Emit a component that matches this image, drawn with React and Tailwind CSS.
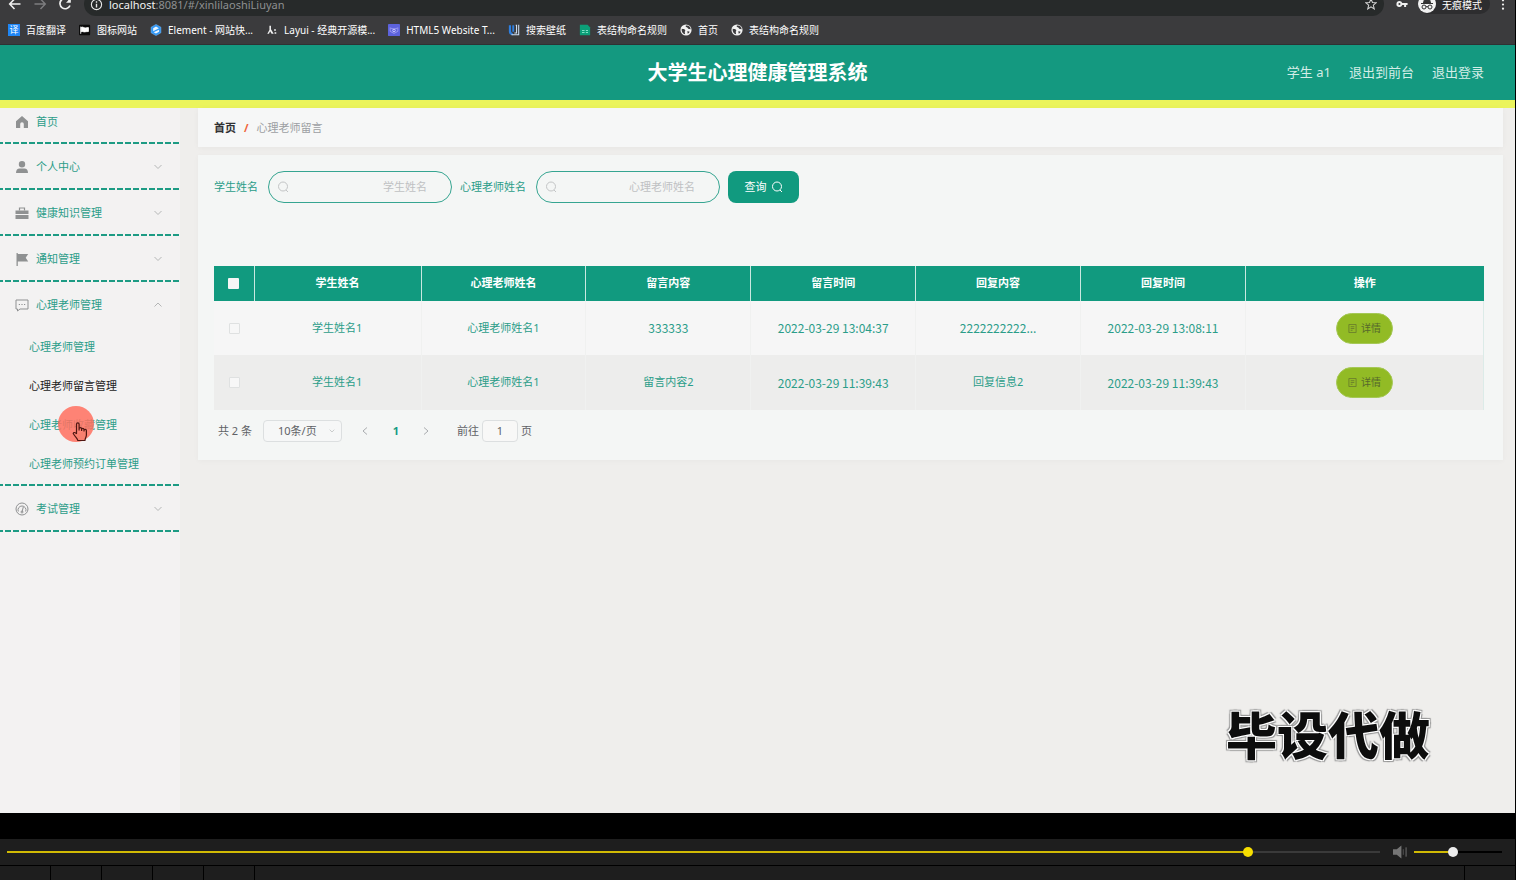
import React, { useState } from "react";

const bookmarks = [
  { id: "fanyi", label: "百度翻译" },
  { id: "flag", label: "图标网站" },
  { id: "element", label: "Element - 网站快..." },
  { id: "layui", label: "Layui - 经典开源模..." },
  { id: "html5", label: "HTML5 Website T..." },
  { id: "wall", label: "搜索壁纸" },
  { id: "sheet", label: "表结构命名规则" },
  { id: "globe", label: "首页" },
  { id: "globe", label: "表结构命名规则" },
];

const columns = ["学生姓名", "心理老师姓名", "留言内容", "留言时间", "回复内容", "回复时间"];

const rows = [
  ["学生姓名1", "心理老师姓名1", "333333", "2022-03-29 13:04:37", "2222222222...", "2022-03-29 13:08:11"],
  ["学生姓名1", "心理老师姓名1", "留言内容2", "2022-03-29 11:39:43", "回复信息2", "2022-03-29 11:39:43"],
];

const teacherMenu = ["心理老师管理", "心理老师留言管理", "心理老师收藏管理", "心理老师预约订单管理"];

function BookmarkIcon({ id }) {
  if (id === "fanyi") {
    return (
      <span className="flex h-3 w-3 items-center justify-center bg-[#1f86f5] text-[9px] leading-3 text-white">译</span>
    );
  }
  return (
    <svg viewBox="0 0 14 14" className="h-3 w-3">
      {id === "flag" && (
        <>
          <rect x="0" y="1" width="13" height="12" rx="1" fill="#0b0b0b" />
          <path d="M2 3v8.500M2.500 4c2-1.200 3.500 1 5.500.6 1-.2 2-.6 3-.4v4.600c-2-.4-3 .6-5 .4-1.500-.2-2-.8-3.500-.2z" fill="#fff" stroke="#fff" strokeWidth="1" />
        </>
      )}
      {id === "element" && (
        <>
          <path d="M7 .5l5.700 3.200v6.600L7 13.500 1.300 10.300V3.700z" fill="#2f97f7" stroke="#7cc0ff" strokeWidth=".6" />
          <path d="M7 3l3.400 1.900L3.700 8.600V5zM10.600 6.700v2.200L7 11 4.300 9.700z" fill="#e9f5ff" />
        </>
      )}
      {id === "layui" && (
        <path d="M4 2h1.800v4L9 11.500H6.500L4.800 8.500 3.500 11.500H1.500L4 7zM9.500 6h2v1.800h-2zM10 9.700h2v1.800h-2z" fill="#f1f1f1" />
      )}
      {id === "html5" && (
        <>
          <rect width="14" height="14" rx="1" fill="#5c62dc" />
          <path d="M2 4.500l5 1.500 5-1.500M2.500 5v3.500L7 11l4.500-2.500V5" fill="none" stroke="#a29ff0" />
          <circle cx="7" cy="7.500" r="1.500" fill="none" stroke="#d6d3ff" />
        </>
      )}
      {id === "wall" && (
        <>
          <path d="M1 1.500h2.500V8c0 2 1 2.500 2 2.500V13C2.500 13 1 11.500 1 8.500zM5 1.500h2.200V9H5z" fill="#2e7fe0" />
          <path d="M9 1.500h1v9H7.500M12.500 1v11.500H4" fill="none" stroke="#cfe2f8" strokeWidth="1.200" />
        </>
      )}
      {id === "sheet" && (
        <>
          <path d="M1 1h9l3 3v9H1z" fill="#0c9f78" />
          <path d="M3.500 7.500h3M8 7.500h2.500M3.500 10h3M8 10h2.500" stroke="#7fe0c4" strokeWidth="1.200" />
        </>
      )}
      {id === "globe" && (
        <>
          <circle cx="7" cy="7" r="6.500" fill="#f2f2f2" />
          <path d="M2 5.500c2 .2 3.500.3 4 1.500.6 1.300-.8 1.500-.4 3l.4 2c-2.600-.6-4.600-3-4-6.500zM7 1.800c-.8 1-.4 1.700 1 2 1.500.4 1 1.700 2.500 2 1 .2 1.500 0 2 .6-.2-3-2.500-5-5.500-4.600zM8.500 8.500c1-.4 2 0 2.800.6-.6 1-1.300 1.800-2.300 2.200z" fill="#3c3b3e" />
        </>
      )}
    </svg>
  );
}

function BrowserBar() {
  return (
    <div className="shrink-0 bg-[#3b3b3d] text-white">
      <div className="flex h-4 items-end overflow-hidden">
        <div className="flex h-6 w-full shrink-0 items-center">
          <div className="flex w-[84px] shrink-0 items-center gap-[11px] pl-2">
            <svg viewBox="0 0 14 14" className="h-[14px] w-[14px]" fill="none" stroke="#f0f0f0" strokeWidth="1.600">
              <path d="M12.500 7H2M6.500 2L1.700 7l4.800 5" />
            </svg>
            <svg viewBox="0 0 14 14" className="h-[14px] w-[14px]" fill="none" stroke="#7d7d7f" strokeWidth="1.400">
              <path d="M1.500 7H12M7.500 2l4.800 5-4.800 5" />
            </svg>
            <svg viewBox="0 0 14 14" className="h-[14px] w-[14px]" fill="none" stroke="#f0f0f0" strokeWidth="1.700">
              <path d="M11.600 3.800A5.200 5.200 0 1 0 12 8.500" />
              <path d="M12.800 1v4.800H8z" fill="#f0f0f0" stroke="none" />
            </svg>
          </div>
          <div className="flex h-6 flex-1 items-center gap-[6px] rounded-full bg-[#272a2a] px-[6px] text-[11px] leading-3">
            <svg viewBox="0 0 14 14" className="h-[13px] w-[13px]" fill="none" stroke="#e8e8e8" strokeWidth="1.200">
              <circle cx="7" cy="7" r="5.500" />
              <path d="M7 6.200v4M7 3.600v1.400" strokeWidth="1.500" />
            </svg>
            <span className="flex-1 pt-px text-[#8e9091]">
              <span className="text-[#f2f2f2]">localhost</span>:8081/#/xinlilaoshiLiuyan
            </span>
            <svg viewBox="0 0 14 14" className="mr-px h-3 w-3" fill="none" stroke="#d5d5d5" strokeWidth="1.200">
              <path d="M7 1l1.700 4.200 4.500.3-3.500 2.900 1.100 4.400L7 10.400l-3.800 2.400 1.100-4.400L.8 5.500l4.500-.3z" />
            </svg>
          </div>
          <div className="flex w-[131px] shrink-0 items-center pl-3">
            <svg viewBox="0 0 14 14" className="h-3 w-3" fill="#f0f0f0">
              <path d="M4 3.500a3.500 3.500 0 1 0 3.300 4.700h2.200V10.500h2.300V8.200H13.500V5.800H7.300A3.500 3.500 0 0 0 4 3.500zm0 2.300a1.200 1.200 0 1 1 0 2.400 1.200 1.200 0 0 1 0-2.400z" />
            </svg>
            <div className="ml-[10px] flex h-5 items-center gap-[6px] rounded-full bg-[#2d2d2f] pr-2 text-[10px] leading-3">
              <svg viewBox="0 0 18 18" className="h-[18px] w-[18px]">
                <circle cx="9" cy="9" r="9" fill="#f1f1f1" />
                <path d="M3 8.500h12M5.500 8l1-4h5l1 4z" fill="#333" stroke="#333" />
                <circle cx="6" cy="12" r="2" fill="none" stroke="#333" />
                <circle cx="12" cy="12" r="2" fill="none" stroke="#333" />
                <path d="M8 11.700h2" stroke="#333" />
              </svg>
              <span className="pt-px">无痕模式</span>
            </div>
            <svg viewBox="0 0 4 14" className="ml-[11px] h-[13px] w-1" fill="#f0f0f0">
              <circle cx="2" cy="2.500" r="1.200" />
              <circle cx="2" cy="7" r="1.200" />
              <circle cx="2" cy="11.500" r="1.200" />
            </svg>
          </div>
        </div>
      </div>
      <nav className="flex h-[29px] items-center gap-[13px] border-b border-[#2f3133] pl-2 text-[10px]">
        {bookmarks.map((b, i) => (
          <a key={i} href="#" className="flex items-center gap-[6px] whitespace-nowrap">
            <BookmarkIcon id={b.id} />
            {b.label}
          </a>
        ))}
      </nav>
    </div>
  );
}

function Chevron({ up }) {
  return (
    <svg viewBox="0 0 8 6" className="ml-auto h-[6px] w-2" fill="none" stroke="#b4b6b6">
      <path d={up ? "M.5 4.500L4 1l3.500 3.500" : "M.5 1L4 4.500 7.500 1"} />
    </svg>
  );
}

function SearchIcon({ className }) {
  return (
    <svg viewBox="0 0 12 12" className={className} fill="none" stroke="currentColor">
      <circle cx="6" cy="5.500" r="4.500" />
      <path d="M9 9l2 2" />
    </svg>
  );
}

function DashedLine() {
  return (
    <div className="h-[2px] bg-[repeating-linear-gradient(90deg,#1d9b84_0_3px,transparent_3px_5px,#1d9b84_5px_8px)]" />
  );
}

const menuIcons = {
  home: <path d="M7 1L1 6.300V13h4.200V9a1.800 1.800 0 0 1 3.600 0v4H13V6.300z" fill="#8f9192" />,
  user: (
    <path d="M7 1a3.200 3.200 0 1 1 0 6.400A3.200 3.200 0 0 1 7 1zM1 13c0-3.200 1.500-4.600 3.500-4.600h5C11.500 8.400 13 9.800 13 13z" fill="#8f9192" />
  ),
  box: (
    <>
      <path d="M.5 4.500h13V8H.5zM.5 9h13v4H.5z" fill="#8f9192" />
      <path d="M4.500 4.500V2h5v2.500" fill="none" stroke="#8f9192" strokeWidth="1.200" />
    </>
  ),
  flag: <path d="M1.500 1h1.300v1h10.400l-2.500 3.700 2.500 3.800H2.800V14H1.500z" fill="#8f9192" />,
  chat: (
    <>
      <path d="M1 2h12v9H5l-2.500 2V11H1z" fill="none" stroke="#8f9192" />
      <path d="M3.800 6.500h1.200M6.400 6.500h1.200M9 6.500h1.200" stroke="#8f9192" strokeWidth="1.200" />
    </>
  ),
  gauge: (
    <>
      <circle cx="7" cy="7" r="6" fill="none" stroke="#8f9192" />
      <path d="M3.300 9.500a4 4 0 1 1 7.400 0M7 10l1.300-5" fill="none" stroke="#8f9192" />
      <circle cx="7" cy="10" r="1" fill="none" stroke="#8f9192" />
    </>
  ),
};

function MenuRow({ icon, label, arrow, className = "h-11 pt-[2px]" }) {
  return (
    <a href="#" className={`flex items-center gap-[7px] pr-[18px] pl-[15px] ${className}`}>
      <svg viewBox="0 0 14 14" className="h-[14px] w-[14px]">{menuIcons[icon]}</svg>
      {label}
      {arrow && <Chevron up={arrow === "up"} />}
    </a>
  );
}

function Sidebar() {
  return (
    <aside className="w-[180px] shrink-0 bg-[#f3f2f2]">
      <MenuRow icon="home" label="首页" className="h-[34px] pb-[6px]" />
      <DashedLine />
      <MenuRow icon="user" label="个人中心" arrow="down" />
      <DashedLine />
      <MenuRow icon="box" label="健康知识管理" arrow="down" />
      <DashedLine />
      <MenuRow icon="flag" label="通知管理" arrow="down" />
      <DashedLine />
      <MenuRow icon="chat" label="心理老师管理" arrow="up" />
      <ul className="pt-[2px]">
        {teacherMenu.map((item, i) => (
          <li key={item} className="relative">
            <a href="#" className={`flex h-[39px] items-center pl-[29px] ${i === 1 ? "text-[#222]" : ""}`}>
              {item}
            </a>
            {i === 2 && <ClickPointer />}
          </li>
        ))}
      </ul>
      <DashedLine />
      <MenuRow icon="gauge" label="考试管理" arrow="down" />
      <DashedLine />
    </aside>
  );
}

// click highlight with the hand cursor on top
function ClickPointer() {
  return (
    <div className="absolute top-0 left-[58px] h-9 w-9 rounded-full bg-[#ff705f]/85">
      <svg viewBox="0 0 16 20" className="absolute top-[16px] left-[14px] h-5 w-4" fill="#f8806f" stroke="#501712" strokeWidth="1.200" strokeLinejoin="round">
        <path d="M4.500 12V2.200a1.300 1.300 0 0 1 2.600 0V8M7.100 8.500V6.800a1.200 1.200 0 0 1 2.500 0V9M9.600 9V7.600a1.200 1.200 0 0 1 2.400 0v1.900M12 9.500V8.600a1.200 1.200 0 0 1 2.400 0V13c0 2-1.400 3-1.400 5.500H5.800c0-2-2.600-3.300-4.600-7 .3-1.500 2-1.300 3.300.5" />
      </svg>
    </div>
  );
}

function SearchField({ id, label }) {
  return (
    <>
      <label htmlFor={id}>{label}</label>
      <div className="ml-[10px] mr-2 flex h-8 w-[184px] items-center rounded-full border border-[#36a591] pr-6 pl-2">
        <SearchIcon className="h-3 w-3 shrink-0 text-[#c3c5c6]" />
        <input id={id} type="text" placeholder={label} className="w-full min-w-0 bg-transparent text-right outline-none placeholder:text-[#bfc1c3]" />
      </div>
    </>
  );
}

function MessageTable() {
  return (
    <table className="w-full table-fixed border-collapse text-center">
      <colgroup>
        <col className="w-10" />
        <col className="w-[167px]" />
        {columns.slice(1).map((c) => (
          <col key={c} />
        ))}
        <col className="w-[238px]" />
      </colgroup>
      <thead>
        <tr className="h-[35px] bg-[#119a7f] text-white">
          <th className="border-r border-[#c9e8e0]">
            <input type="checkbox" aria-label="全选" className="mx-auto block h-[11px] w-[11px] appearance-none rounded-[1px] bg-[#f6f6f6]" />
          </th>
          {columns.map((c) => (
            <th key={c} className="border-r border-[#c9e8e0] font-bold">{c}</th>
          ))}
          <th className="font-bold">操作</th>
        </tr>
      </thead>
      <tbody>
        {rows.map((row, i) => (
          <tr key={i} className={i % 2 ? "h-[55px] bg-[#ededec]" : "h-[54px] bg-[#f6f6f6]"}>
            <td>
              <input type="checkbox" aria-label={`选择第${i + 1}行`} className="mx-auto block h-[11px] w-[11px] appearance-none rounded-[1px] border border-[#dfe1e1] bg-[#f7f7f7]" />
            </td>
            {row.map((cell, j) => (
              <td key={j} className={/^\d/.test(cell) ? "border-r border-[#f0f1f0] font-['Noto_Sans_CJK_SC'] text-xs" : "border-r border-[#f0f1f0]"}>
                {cell}
              </td>
            ))}
            <td className="border-r border-[#dcebe8]">
              <button className="mx-auto flex h-[31px] w-[57px] items-center justify-center gap-1 rounded-full border border-[#a5c855] bg-[#92bb25] text-[10px] text-[#56692c]">
                <svg viewBox="0 0 10 10" className="h-[9px] w-[9px]" fill="none" stroke="#6b7f2b">
                  <path d="M1 .5h8v9H1zM3 3h4M3 5h4M3 7h2" />
                </svg>
                详情
              </button>
            </td>
          </tr>
        ))}
      </tbody>
    </table>
  );
}

function Pagination() {
  return (
    <div className="mt-[10px] flex h-[22px] items-center pl-1 text-[#606266]">
      <span className="w-[45px]">共 2 条</span>
      <div className="relative h-[22px] w-[79px]">
        <select aria-label="每页条数" className="h-full w-full appearance-none rounded-sm border border-[#dcdfe0] bg-[#f6f7f7] pl-[14px]">
          <option>10条/页</option>
        </select>
        <svg viewBox="0 0 8 6" className="absolute top-[9px] right-[7px] h-1 w-[6px]" fill="none" stroke="#b4b6b6">
          <path d="M.5 1L4 4.500 7.500 1" />
        </svg>
      </div>
      <button aria-label="上一页" className="ml-5 w-2">
        <svg viewBox="0 0 6 8" className="h-2 w-[6px]" fill="none" stroke="#a8abae">
          <path d="M5 .5L1 4l4 3.500" />
        </svg>
      </button>
      <button className="mx-[21px] w-[10px] font-bold text-[#169b83]">1</button>
      <button aria-label="下一页" className="ml-[1px] w-2">
        <svg viewBox="0 0 6 8" className="h-2 w-[6px]" fill="none" stroke="#a8abae">
          <path d="M1 .5L5 4 1 7.500" />
        </svg>
      </button>
      <label htmlFor="page-jump" className="ml-[26px]">前往</label>
      <input id="page-jump" type="text" defaultValue="1" className="mx-[3px] h-[22px] w-9 rounded-sm border border-[#dcdfe0] bg-[#f8f8f7] pb-px text-center" />
      <span>页</span>
    </div>
  );
}

function Player() {
  const [position, setPosition] = useState(907);
  const [volume, setVolume] = useState(44);

  return (
    <div className="mr-px shrink-0">
      <div className="flex h-[26px] items-center bg-[#1e1e1e] pr-[13px] pl-[7px]">
        <input
          type="range"
          aria-label="播放进度"
          min="0"
          max="1000"
          value={position}
          onChange={(e) => setPosition(e.target.value)}
          style={{ backgroundImage: `linear-gradient(90deg, #d0ba04 ${position / 10}%, #3a3a3a ${position / 10}%)` }}
          className="h-[2px] min-w-0 flex-1 appearance-none [&::-webkit-slider-thumb]:h-[10px] [&::-webkit-slider-thumb]:w-[10px] [&::-webkit-slider-thumb]:appearance-none [&::-webkit-slider-thumb]:rounded-full [&::-webkit-slider-thumb]:bg-[#f7de00]"
        />
        <svg viewBox="0 0 15 14" className="mr-[7px] ml-[13px] h-[14px] w-[14px] shrink-0">
          <path d="M0 4h4l5-4v14l-5-4H0z" fill="#757575" />
          <path d="M11 4v6" stroke="#555" />
          <path d="M14 2v10" stroke="#757575" />
        </svg>
        <input
          type="range"
          aria-label="音量"
          min="0"
          max="100"
          value={volume}
          onChange={(e) => setVolume(e.target.value)}
          style={{ backgroundImage: `linear-gradient(90deg, #d0ba04 ${volume}%, #000 ${volume}%)` }}
          className="h-[2px] w-[88px] shrink-0 appearance-none [&::-webkit-slider-thumb]:h-[10px] [&::-webkit-slider-thumb]:w-[10px] [&::-webkit-slider-thumb]:appearance-none [&::-webkit-slider-thumb]:rounded-full [&::-webkit-slider-thumb]:bg-[#ececec]"
        />
      </div>
      <div className="mt-px flex h-[14px] gap-px">
        {["停止", "上一个", "播放", "下一个", "打开"].map((name) => (
          <button key={name} aria-label={name} className="w-[50px] bg-[#1e1e1e]" />
        ))}
        <div className="flex-1 bg-[#1e1e1e]" />
        <div className="w-[50px] bg-[#1e1e1e]" />
      </div>
    </div>
  );
}

export default function App() {
  return (
    <div className="flex min-h-screen flex-col bg-black font-['Noto_Sans','Noto_Sans_CJK_SC',sans-serif] text-[11px]">
      <div className="relative mr-px mb-[26px] flex flex-1 flex-col bg-[#efeeec]">
        <BrowserBar />

        <header className="grid h-[63px] shrink-0 grid-cols-[1fr_auto_1fr] items-center border-b-8 border-[#ebf45c] bg-[#149980] text-white">
          <h1 className="col-start-2 pt-px text-xl font-bold">大学生心理健康管理系统</h1>
          <div className="flex justify-end gap-[18px] pr-[31px] text-[13px] text-[#d3ede7]">
            <span>学生 a1</span>
            <a href="#">退出到前台</a>
            <a href="#">退出登录</a>
          </div>
        </header>

        <div className="flex flex-1 text-[#2b9d89]">
          <Sidebar />
          <main className="min-w-0 flex-1 pr-3 pl-[18px]">
            <div className="flex h-[39px] items-center gap-2 bg-[#f6f7f7] px-4 pt-px shadow-[0_1px_6px_rgba(0,0,0,0.04)]">
              <a href="#" className="font-bold text-[#303133]">首页</a>
              <span className="font-bold text-[#f0643c]">/</span>
              <span className="text-[#9c9fa3]">心理老师留言</span>
            </div>
            <section className="mt-2 bg-[#f4f6f5] pt-4 pr-[19px] pb-[18px] pl-4 shadow-[0_1px_6px_rgba(0,0,0,0.03)]">
              <form className="mb-[63px] flex items-center" onSubmit={(e) => e.preventDefault()}>
                <SearchField id="student" label="学生姓名" />
                <SearchField id="teacher" label="心理老师姓名" />
                <button className="flex h-8 w-[71px] items-center justify-center gap-1 rounded-lg bg-[#119a7f] text-white">
                  查询
                  <SearchIcon className="h-3 w-3" />
                </button>
              </form>
              <MessageTable />
              <Pagination />
            </section>
          </main>
        </div>

        <div className="absolute right-[85px] bottom-[48px] font-['Noto_Sans_CJK_SC'] text-[51px] leading-[64px] font-black text-[#0d0d0d] [text-shadow:1px_1px_0_#fff,-1px_-1px_0_#fff,1px_-1px_0_#fff,-1px_1px_0_#fff,2px_2px_1px_#999,-2px_-2px_1px_#999,2px_-2px_1px_#999,-2px_2px_1px_#999]">
          毕设代做
        </div>
      </div>
      <Player />
    </div>
  );
}
